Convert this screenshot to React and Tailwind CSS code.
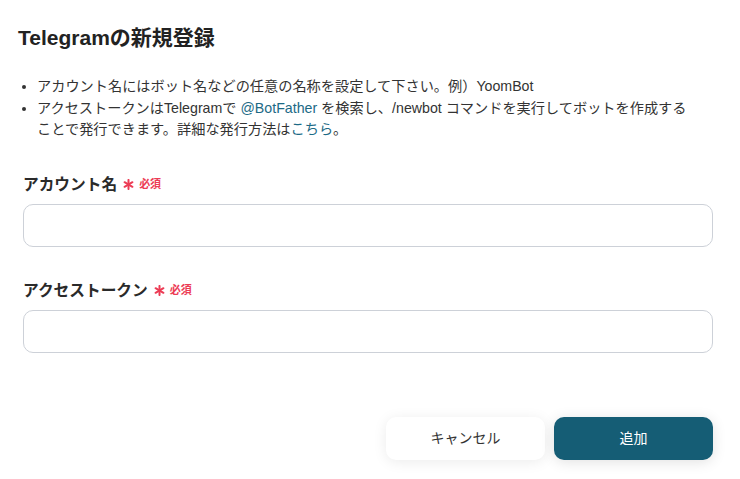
import React from 'react';

const font = { fontFamily: '"Liberation Sans", "Noto Sans CJK JP", sans-serif' };

function Asterisk() {
  return (
    <svg width="11" height="11" viewBox="0 0 12 12" className="shrink-0">
      <g stroke="#ec3c55" strokeWidth="2.2" strokeLinecap="round">
        <line x1="6" y1="1" x2="6" y2="11" />
        <line x1="1.7" y1="3.5" x2="10.3" y2="8.5" />
        <line x1="1.7" y1="8.5" x2="10.3" y2="3.5" />
      </g>
    </svg>
  );
}

function Field({ label }) {
  return (
    <div>
      <div className="flex items-center h-[24px]">
        <span className="text-[15.7px] font-bold text-[#2a2a2a]">{label}</span>
        <span className="ml-[6px]"><Asterisk /></span>
        <span className="ml-[5px] text-[11px] font-bold text-[#ec3c55]">必須</span>
      </div>
      <input
        type="text"
        className="mt-[7px] block w-full h-[43px] rounded-[10px] border border-[#cdd1d8] bg-white px-3 outline-none"
      />
    </div>
  );
}

export default function App() {
  return (
    <div className="w-[740px] h-[479px] bg-white overflow-hidden" style={font}>
      <div className="px-[18px] pt-[26px]">
        <h1 className="text-[21px] leading-[24px] font-bold text-[#222]">Telegramの新規登録</h1>
        <ul className="mt-[26px] pl-[19px] list-disc text-[14.2px] leading-[21.5px] text-[#333]">
          <li>アカウント名にはボット名などの任意の名称を設定して下さい。例）YoomBot</li>
          <li>
            アクセストークンはTelegramで <span className="text-[#1c6a86]">@BotFather</span> を検索し、/newbot コマンドを実行してボットを作成する
            <br />
            ことで発行できます。詳細な発行方法は<span className="text-[#1c6a86]">こちら</span>。
          </li>
        </ul>
      </div>

      <div className="px-[23px] mt-[32px] flex flex-col gap-[32px] w-[736px]">
        <Field label="アカウント名" />
        <Field label="アクセストークン" />
      </div>

      <div className="flex justify-end gap-[9px] pr-[27px] mt-[64px]">
        <button className="w-[159px] h-[43px] rounded-[10px] bg-white text-[14px] text-[#333] shadow-[0_2px_14px_rgba(0,0,0,0.08)]">
          キャンセル
        </button>
        <button className="w-[159px] h-[43px] rounded-[10px] bg-[#155d75] text-[14px] text-white shadow-[0_2px_14px_rgba(0,0,0,0.12)]">
          追加
        </button>
      </div>
    </div>
  );
}
